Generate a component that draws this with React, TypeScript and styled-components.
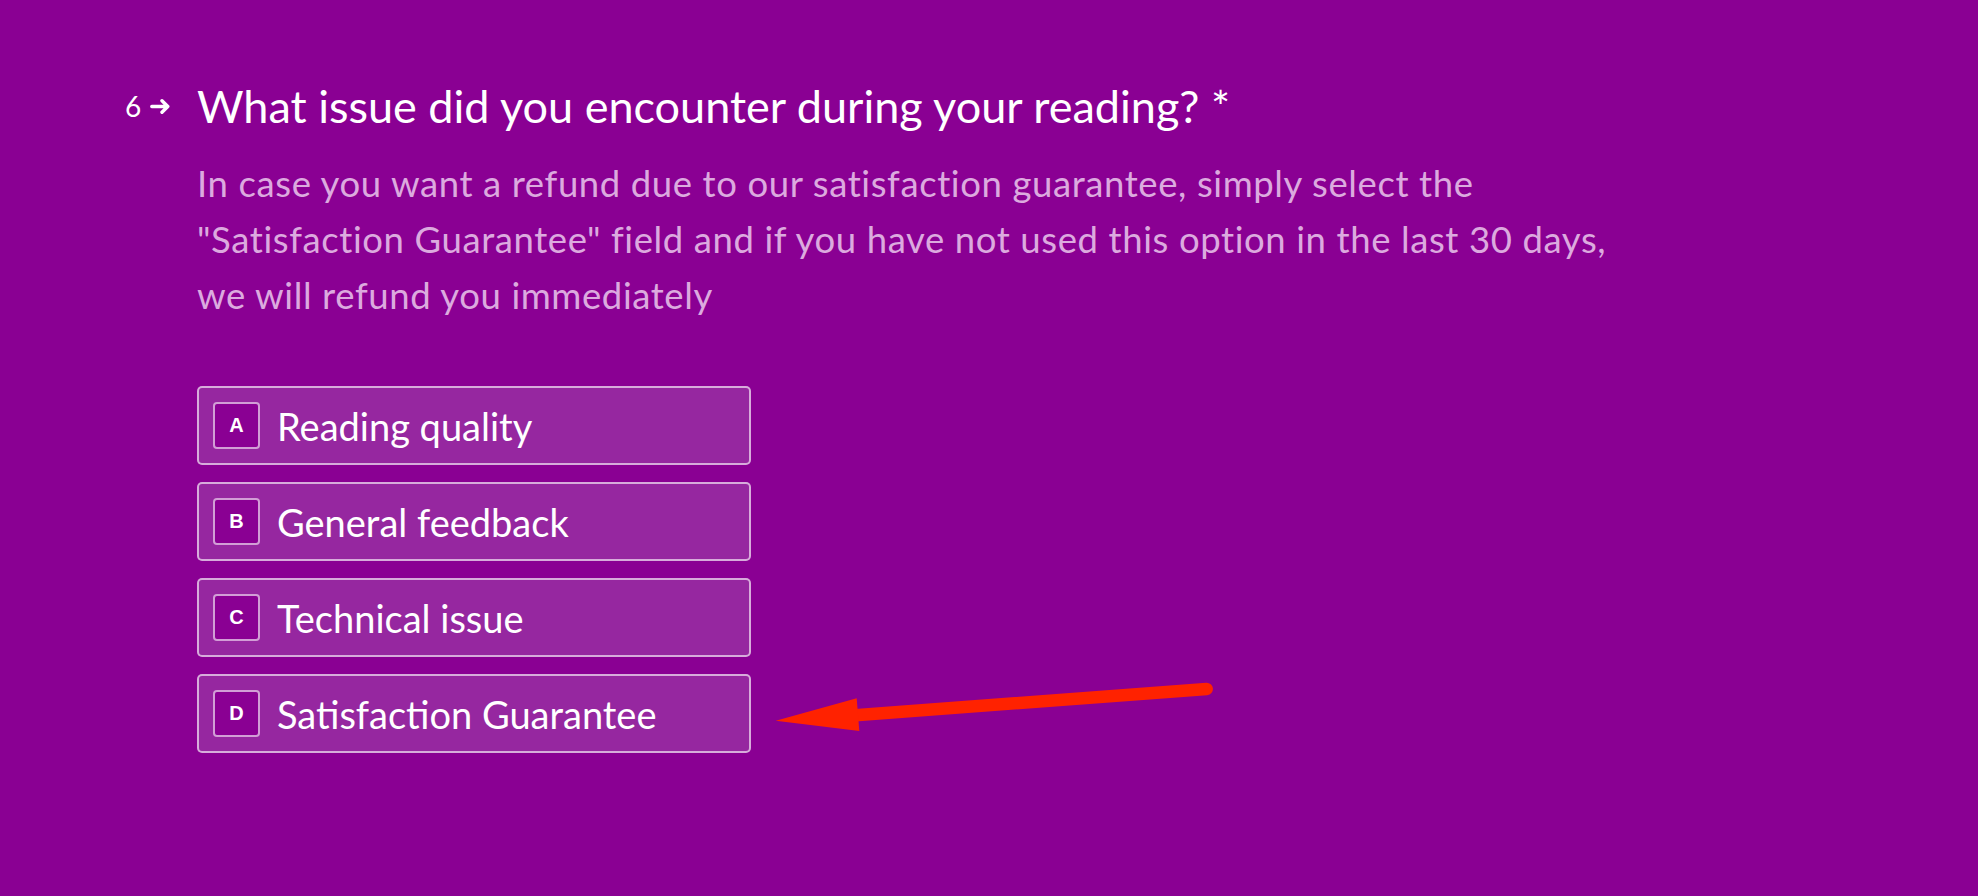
import React from "react";
import styled, { createGlobalStyle } from "styled-components";

const GlobalStyle = createGlobalStyle`
  html, body {
    margin: 0;
    padding: 0;
    background: #8a0093;
  }

  body {
    font-family: Lato, "Open Sans", sans-serif;
  }
`;

const Page = styled.main`
  position: relative;
  min-height: 896px;
  box-sizing: border-box;
  padding: 78px 0 0 125px;
  background: #8a0093;
  color: #ffffff;
`;

const QuestionRow = styled.section`
  display: flex;
  align-items: flex-start;
`;

const Counter = styled.div`
  display: flex;
  align-items: center;
  gap: 9px;
  width: 72px;
  height: 56px;
  flex-shrink: 0;
  font-size: 28px;
  line-height: 56px;
  color: #ffffff;
`;

const Body = styled.div`
  display: flex;
  flex-direction: column;
`;

const Title = styled.h1`
  margin: 0;
  font-size: 45px;
  font-weight: 400;
  line-height: 56px;
  color: #ffffff;
`;

const Description = styled.p`
  margin: 21px 0 0;
  font-size: 36.5px;
  letter-spacing: 0.6px;
  line-height: 56px;
  color: #dcaadf;
`;

const Options = styled.ul`
  display: flex;
  flex-direction: column;
  gap: 17px;
  margin: 63px 0 0;
  padding: 0;
  list-style: none;
`;

const Option = styled.li`
  display: flex;
  align-items: center;
  gap: 17px;
  width: 554px;
  height: 79px;
  box-sizing: border-box;
  padding: 0 14px;
  border: 2px solid rgba(255, 255, 255, 0.62);
  border-radius: 5px;
  background: #9627a0;
  cursor: pointer;
`;

const Key = styled.span`
  display: flex;
  align-items: center;
  justify-content: center;
  width: 47px;
  height: 47px;
  box-sizing: border-box;
  border: 2px solid rgba(255, 255, 255, 0.62);
  border-radius: 4px;
  background: #8a0093;
  font-family: "Liberation Sans", Arial, sans-serif;
  font-size: 20px;
  font-weight: 700;
  color: #ffffff;
`;

const Label = styled.span`
  font-size: 38px;
  line-height: 56px;
  color: #ffffff;
`;

const Pointer = styled.svg`
  position: absolute;
  left: 760px;
  top: 670px;
  width: 470px;
  height: 80px;
  pointer-events: none;
`;

const options = [
  { key: "A", label: "Reading quality" },
  { key: "B", label: "General feedback" },
  { key: "C", label: "Technical issue" },
  { key: "D", label: "Satisfaction Guarantee" },
];

export default function App() {
  return (
    <>
      <GlobalStyle />
      <Page>
        <QuestionRow>
          <Counter>
            <span>6</span>
            <svg width="21" height="15" viewBox="0 0 21 15" aria-hidden="true">
              <path
                d="M1.8 7.5h16M12 1.8L17.8 7.5 12 13.2"
                fill="none"
                stroke="#ffffff"
                strokeWidth="3.4"
                strokeLinecap="round"
                strokeLinejoin="round"
              />
            </svg>
          </Counter>

          <Body>
            <Title>What issue did you encounter during your reading? *</Title>
            <Description>
              In case you want a refund due to our satisfaction guarantee, simply select the
              <br />
              "Satisfaction Guarantee" field and if you have not used this option in the last 30 days,
              <br />
              we will refund you immediately
            </Description>

            <Options>
              {options.map((option) => (
                <Option key={option.key}>
                  <Key>{option.key}</Key>
                  <Label>{option.label}</Label>
                </Option>
              ))}
            </Options>
          </Body>
        </QuestionRow>

        <Pointer viewBox="0 0 470 80" aria-hidden="true">
          <line
            x1="92"
            y1="45.5"
            x2="446.7"
            y2="19"
            stroke="#ff2200"
            strokeWidth="12.5"
            strokeLinecap="round"
          />
          <polygon points="15.7,50.7 96.7,28.3 99.3,61" fill="#ff2200" />
        </Pointer>
      </Page>
    </>
  );
}
